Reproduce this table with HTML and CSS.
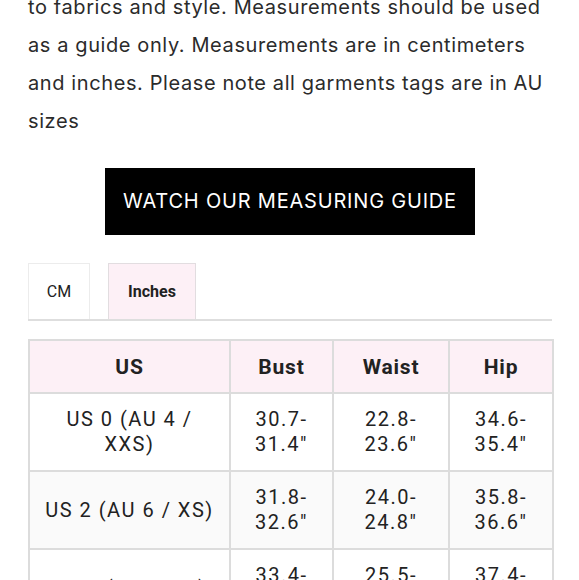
FILE: index.html
```html
<!DOCTYPE html>
<html>
<head>
<meta charset="utf-8">
<link rel="stylesheet" href="styles.css">
</head>
<body>
<div class="page">
  <p class="intro">to fabrics and style. Measurements should be used as a guide only. Measurements are in centimeters and inches. Please note all garments tags are in AU sizes</p>
  <div class="btn-row">
    <a class="guide-btn">WATCH OUR MEASURING GUIDE</a>
  </div>
  <div class="tabs">
    <div class="tab">CM</div>
    <div class="tab active">Inches</div>
  </div>
  <table class="chart">
    <colgroup>
      <col class="c1"><col class="c2"><col class="c3"><col class="c4">
    </colgroup>
    <thead>
      <tr><th>US</th><th>Bust</th><th>Waist</th><th>Hip</th></tr>
    </thead>
    <tbody>
      <tr><td>US 0 (AU 4 / XXS)</td><td>30.7-<br>31.4"</td><td>22.8-<br>23.6"</td><td>34.6-<br>35.4"</td></tr>
      <tr class="alt"><td>US 2 (AU 6 / XS)</td><td>31.8-<br>32.6"</td><td>24.0-<br>24.8"</td><td>35.8-<br>36.6"</td></tr>
      <tr><td>US 4 (AU 8 / S)</td><td>33.4-<br>34.2"</td><td>25.5-<br>26.3"</td><td>37.4-<br>38.2"</td></tr>
    </tbody>
  </table>
</div>
</body>
</html>
```
FILE: styles.css
```css
html, body {
  margin: 0;
  padding: 0;
  background: #fff;
  overflow: hidden;
}
.page {
  width: 524px;
  padding: 0 27px 0 28px;
}
.intro {
  margin: -12px 0 0 0;
  font-family: Inter, sans-serif;
  font-size: 20px;
  line-height: 38px;
  letter-spacing: 0.6px;
  color: #2b2b2b;
}
.btn-row {
  display: flex;
  justify-content: center;
  margin-top: 28px;
}
.guide-btn {
  display: block;
  background: #000;
  color: #fff;
  font-family: Inter, sans-serif;
  font-size: 20px;
  letter-spacing: 0.8px;
  height: 67px;
  line-height: 67px;
  padding: 0 18px;
}
.tabs {
  display: flex;
  gap: 18px;
  margin-top: 28px;
  border-bottom: 2px solid #dedede;
}
.tab {
  width: 62px;
  height: 56px;
  line-height: 56px;
  text-align: center;
  font-family: Roboto, sans-serif;
  font-size: 16px;
  color: #222;
  border: 1px solid #ececec;
  border-bottom: none;
  box-sizing: border-box;
}
.tab.active {
  width: 88px;
  background: #fdf0f6;
  font-weight: bold;
  border-color: #e2dde0;
}
.chart {
  margin-top: 18px;
  border-collapse: collapse;
  width: 524px;
  table-layout: fixed;
  font-family: Roboto, sans-serif;
  color: #222;
}
.c1 { width: 201px; }
.c2 { width: 103px; }
.c3 { width: 116px; }
.c4 { width: 104px; }
.chart th, .chart td {
  border: 2px solid #dcdcdc;
  text-align: center;
  vertical-align: middle;
}
.chart th {
  background: #fdf0f6;
  font-size: 21px;
  font-weight: bold;
  height: 51px;
  padding: 0;
  letter-spacing: 0.8px;
}
.chart td {
  font-size: 20px;
  line-height: 25px;
  letter-spacing: 1.5px;
  height: 76px;
  padding: 0 12px;
}
.chart tr.alt td {
  background: #fafafa;
}
```
